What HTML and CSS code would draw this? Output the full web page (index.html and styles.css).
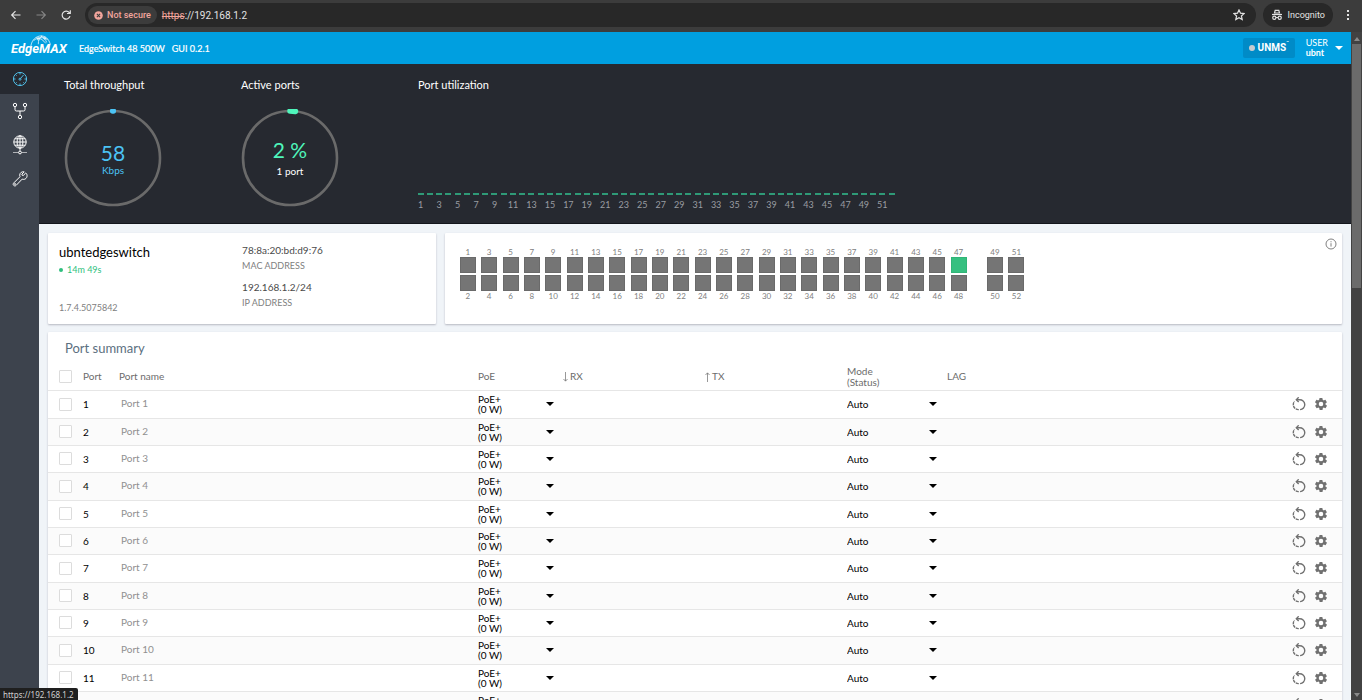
FILE: index.html
```html
<!DOCTYPE html>
<html lang="en">
<head>
<meta charset="utf-8">
<title>EdgeSwitch 48 500W</title>
<link rel="stylesheet" href="styles.css">
</head>
<body>
<header class="browser">
  <button class="nav-btn" aria-label="Back"><svg width="12" height="12" viewBox="0 0 12 12"><path d="M10.500 6H1.800M5.500 2.200L1.700 6l3.800 3.800"/></svg></button>
  <button class="nav-btn nav-off" aria-label="Forward"><svg width="12" height="12" viewBox="0 0 12 12"><path d="M1.500 6h8.700M6.500 2.200L10.300 6 6.500 9.800"/></svg></button>
  <button class="nav-btn" aria-label="Reload"><svg width="12" height="12" viewBox="0 0 12 12"><path d="M10 7.200A4 4 0 1 1 9.300 3.600L10 4.300M10.300 1.300v3.200H7"/></svg></button>
  <div class="address">
    <button class="secure"><svg width="9" height="9" viewBox="0 0 9 9"><circle cx="4.500" cy="4.500" r="4.300" fill="#f2a59c"/><path d="M2.900 2.900l3.200 3.200M6.100 2.900L2.900 6.100" stroke="#3c3c3c" stroke-width="1.100"/></svg>Not secure</button>
    <span class="url"><s>https</s>://192.168.1.2</span>
    <button class="star" aria-label="Bookmark"><svg width="12" height="12" viewBox="0 0 12 12"><path d="M6 .9l1.500 3.300 3.600.4-2.700 2.400.8 3.600L6 8.800l-3.200 1.800.8-3.600L.9 4.600l3.600-.4z"/></svg></button>
  </div>
  <div class="incognito"><svg width="12" height="12" viewBox="0 0 12 12"><path d="M3.500 4l.7-2.700h3.600L8.500 4z"/><path d="M1 5.500h10"/><circle cx="3.300" cy="8.800" r="1.600"/><circle cx="8.700" cy="8.800" r="1.600"/><path d="M5 8.500h2"/></svg>Incognito</div>
  <button class="dots" aria-label="Menu"><i></i><i></i><i></i></button>
</header>
<div class="viewport">
  <div class="app">
    <header class="topbar">
      <div class="logo"><svg class="globe" width="26" height="13" viewBox="0 0 28 14"><path d="M2 12C3 5 8 1 13 1s8 3 10 9M5 6c5-4 10-4 15-1M10 10c0-4 1-7 4-9M13 1c3 2 5 4 6 7M8 3c4 0 8 3 10 6"/><circle cx="10" cy="4.500" r="1"/><circle cx="17" cy="3.500" r="1"/></svg><span class="wordmark">EdgeMAX</span></div>
      <span class="model">EdgeSwitch 48 500W</span>
      <span class="gui">GUI 0.2.1</span>
      <button class="unms"><i class="unms-dot"></i><span>UNMS</span><sup>™</sup></button>
      <button class="user"><span>USER<br><b>ubnt</b></span><i class="caret"></i></button>
    </header>
    <div class="body">
      <nav class="side">
        <a class="side-item active" href="#" aria-label="Dashboard"><svg width="16" height="16" viewBox="0 0 16 16"><circle cx="8" cy="8" r="6.600"/><path d="M8 1.500v2M8 12.500v2M1.500 8h2M12.500 8h2M3.400 3.400l1.200 1.200M11.400 11.400l1.200 1.200M3.400 12.600l1.200-1.200M8.500 7.500l3-3.500"/><circle cx="8" cy="8.200" r="1"/></svg></a>
        <a class="side-item" href="#" aria-label="Ports"><svg width="16" height="18" viewBox="0 0 16 18"><circle cx="3" cy="3" r="1.700"/><circle cx="13" cy="3" r="1.700"/><circle cx="8" cy="15" r="1.700"/><path d="M3 4.700v3Q3 9 4.500 9h7Q13 9 13 7.700v-3M8 9v4.300"/></svg></a>
        <a class="side-item" href="#" aria-label="Network"><svg width="16" height="20" viewBox="0 0 16 20"><circle cx="8" cy="7" r="6.200"/><ellipse cx="8" cy="7" rx="2.900" ry="6.200"/><path d="M8 .8v15M1.800 7h12.400M2.800 3.800h10.400M2.800 10.200h10.400"/><path d="M1 17.500h5.500M9.500 17.500H15" stroke-opacity=".6"/><circle cx="8" cy="17.500" r="1.400"/></svg></a>
        <a class="side-item" href="#" aria-label="Tools"><svg width="16" height="16" viewBox="0 0 16 16"><path d="M13.700 2.100l-2.500 2.400-1.100-.3-.2-1.100 2.300-2.200C10 .3 7.800 1.700 7.700 4.100c0 .6.100 1.200.3 1.600L1.800 11.900c-1.800 1.700.7 4.200 2.400 2.400l6-6.200c2.900 1.200 5.600-1.500 4.700-4.600-.1-.6-.5-1.200-1.200-1.400z"/><circle cx="3" cy="13" r=".5"/></svg></a>
      </nav>
      <main class="main">
        <section class="dash">
          <div class="gauge">
            <h2>Total throughput</h2>
            <div class="ring"><svg width="98" height="98" viewBox="0 0 98 98"><circle cx="49" cy="49" r="47"/><path d="M48.700 2h.6" stroke="#4cc3f4"/></svg>
              <div class="ring-text kbps"><strong>58</strong><span>Kbps</span></div></div>
          </div>
          <div class="gauge">
            <h2>Active ports</h2>
            <div class="ring"><svg width="98" height="98" viewBox="0 0 98 98"><circle cx="49" cy="49" r="47"/><path d="M49 2a47 47 0 0 1 5.500.4" stroke="#4ff5bb"/></svg>
              <div class="ring-text active-ports"><strong>2 %</strong><span>1 port</span></div></div>
          </div>
          <div class="util">
            <h2>Port utilization</h2>
            <div class="util-chart" id="util"></div>
          </div>
        </section>
        <div class="cards">
          <section class="card device">
            <div class="device-name">
              <h1>ubntedgeswitch</h1>
              <p class="uptime"><i></i>14m 49s</p>
              <p class="version">1.7.4.5075842</p>
            </div>
            <dl class="addresses">
              <dd>78:8a:20:bd:d9:76</dd><dt>MAC ADDRESS</dt>
              <dd>192.168.1.2/24</dd><dt>IP ADDRESS</dt>
            </dl>
          </section>
          <section class="card ports">
            <div class="bank" id="copper"></div>
            <div class="bank fiber" id="fiber"></div>
            <button class="info" aria-label="Info"><svg width="12" height="12" viewBox="0 0 12 12"><circle cx="6" cy="6" r="5"/><path d="M6 5.200v3.400M6 3.200v1.100"/></svg></button>
          </section>
        </div>
        <section class="card summary">
          <h2>Port summary</h2>
          <table>
            <colgroup><col class="c-check"><col class="c-port"><col class="c-name"><col class="c-poe"><col class="c-rx"><col class="c-tx"><col class="c-mode"><col class="c-lag"><col class="c-act"></colgroup>
            <thead><tr><th><input type="checkbox" aria-label="Select all ports"></th><th>Port</th><th>Port name</th><th>PoE</th><th><span class="flow"><svg width="5" height="10" viewBox="0 0 5 10"><path d="M2.500 0v9M.5 7l2 2.200 2-2.200"/></svg>RX</span></th><th><span class="flow"><svg width="5" height="10" viewBox="0 0 5 10"><path d="M2.500 10V1M.5 3l2-2.200 2 2.200"/></svg>TX</span></th><th>Mode<br>(Status)</th><th>LAG</th><th></th></tr></thead>
            <tbody id="rows"></tbody>
          </table>
        </section>
      </main>
    </div>
  </div>
  <div class="scroll"><i class="scroll-up"></i><div class="thumb"></div><i class="scroll-down"></i></div>
</div>
<div class="status">https://192.168.1.2</div>
<script src="app.js"></script>
</body>
</html>
```
FILE: styles.css
```css
* { box-sizing: border-box; }
body { margin: 0; height: 100vh; overflow: hidden; display: flex; flex-direction: column; font-family: Lato, "Open Sans", sans-serif; font-size: 10px; color: #000; background: #f0f4f8; }
h1, h2, p, dl, dd, dt { margin: 0; font-weight: 400; }
button { border: 0; background: none; padding: 0; font: inherit; color: inherit; display: flex; align-items: center; }
svg { fill: none; stroke: currentColor; flex: none; display: block; }

.browser { height: 32px; flex: none; background: #3c3c3c; color: #e3e3e3; display: flex; align-items: center; padding: 0 13px 2px 10px; font-family: Roboto, "Noto Sans", sans-serif; font-size: 9px; }
.browser svg { stroke-width: 1.2; }
.nav-btn { width: 25px; }
.nav-off { color: #858585; }
.address { flex: 1; display: flex; align-items: center; height: 24px; border-radius: 12px; background: #282828; margin-right: 7px; padding: 0 11px 0 3px; }
.secure { height: 18px; padding: 0 6px; gap: 4px; border-radius: 9px; background: #3c3c3c; color: #f2a59c; font-weight: 500; }
.secure svg { stroke: none; }
.url { margin-left: 5px; font-size: 10px; flex: 1; }
.url s { color: #f2a59c; }
.incognito { display: flex; align-items: center; gap: 5px; height: 24px; padding: 0 8px; border-radius: 12px; background: #282828; margin-right: 14px; font-weight: 400; }
.dots { flex-direction: column; gap: 2px; }
.dots i { width: 2px; height: 2px; background: #e3e3e3; }

.viewport { flex: 1; min-height: 0; display: flex; }
.app { flex: 1; min-width: 0; display: flex; flex-direction: column; }
.topbar { height: 32px; flex: none; display: flex; align-items: center; background: #009fe0; color: #fff; padding: 0 8px 0 11px; font-size: 9px; }
.model, .gui { padding-top: 1px; -webkit-text-stroke: 0.2px; }
.logo { position: relative; width: 56px; margin-right: 12px; }
.wordmark { font: italic bold 13px/16px Roboto, "Liberation Sans", sans-serif; display: block; padding-top: 2px; }
.globe { position: absolute; left: 18px; top: -4px; stroke-width: 0.8; }
.gui { margin-left: 7px; flex: 1; }
.unms { height: 20px; padding: 0 6px; background: #008bc7; border-radius: 2px; font: bold 10px/14px Roboto, "Liberation Sans", sans-serif; margin-right: 11px; }
.unms-dot { width: 6px; height: 6px; border-radius: 50%; background: #c8ccd0; margin-right: 3px; }
.unms sup { font-size: 4px; align-self: flex-start; line-height: 10px; }
.user { text-align: left; line-height: 10px; gap: 7px; }
.caret { border: 4px solid transparent; border-top-color: currentColor; border-bottom: 0; flex: none; }

.body { flex: 1; min-height: 0; display: flex; }
.side { width: 39px; flex: none; background: #3d434d; color: #fff; }
.side-item { height: 34px; display: flex; align-items: center; justify-content: center; color: #fff; }
.side-item.active { height: 30px; background: #262930; color: #50bfe8; }
.main { flex: 1; min-width: 0; overflow: hidden; }

.dash { height: 160px; background: #262930; border-bottom: 1px solid #14161c; color: #fff; display: flex; padding: 14px 25px 0; }
.dash h2 { font-size: 11px; line-height: 14px; }
.gauge { width: 177px; flex: none; }
.ring { position: relative; width: 98px; height: 98px; margin-top: 17px; }
.ring circle { stroke: #6a6a6a; stroke-width: 2.6; }
.ring path { stroke-width: 5.5; stroke-linecap: round; }
.ring-text { position: absolute; inset: 0; display: flex; flex-direction: column; align-items: center; }
.ring-text strong { font-weight: 400; font-size: 21px; line-height: 24px; }
.ring-text span { line-height: 12px; }
.kbps { color: #4cc3f4; padding-top: 32px; }
.kbps span { margin-top: -1px; }
.active-ports { padding-top: 29px; }
.active-ports strong { color: #4ff5bb; }
.active-ports span { margin-top: 3px; }
.util-chart { width: 480px; display: flex; margin: 101px 0 0 -2px; }
.util-port { flex: 1 1 0; min-width: 0; display: flex; flex-direction: column; align-items: center; font-size: 9px; line-height: 12px; color: #9a9da2; }
.util-port::before { content: ""; width: 6px; height: 2px; background: #2f9a77; margin-bottom: 4px; }

.cards { display: flex; gap: 9px; padding: 9px 9px 8px; }
.card { background: #fff; box-shadow: 0 1px 2px rgba(50, 50, 70, 0.3); border-radius: 1px; }
.device { width: 30%; flex: none; height: 91px; display: flex; padding: 11px; }
.device-name { width: 50%; display: flex; flex-direction: column; }
.device h1 { font-size: 13px; line-height: 16px; }
.uptime { color: #2fbf7e; font-size: 9px; line-height: 12px; margin-top: 4px; display: flex; align-items: center; gap: 4px; }
.uptime i { width: 4px; height: 4px; border-radius: 50%; background: #2fbf7e; }
.version { margin-top: auto; font-size: 9px; line-height: 11px; color: #808080; }
.addresses dd { font-size: 10px; line-height: 12px; color: #4a4a4a; }
.addresses dt { font-size: 9px; line-height: 11px; color: #808080; margin: 4px 0 10px; }
.ports { flex: 1; display: flex; align-items: flex-start; padding: 15px 6px 0 12px; position: relative; }
.bank { display: grid; grid-auto-flow: column; grid-template-rows: 9px 18px 17px 9px; width: 512px; grid-auto-columns: 1fr; justify-items: center; font-size: 8px; line-height: 9px; color: #808080; margin-right: 15px; }
.fiber { width: 43px; }
.port { width: 16px; height: 16px; background: #757575; border: 1px solid #6a6a6a; }
.port.linked { background: #36c080; border-color: #31b477; }
.info { position: absolute; right: 5px; top: 5px; color: #808080; }

.summary { margin: 0 9px; }
.summary h2 { font-size: 13px; line-height: 16px; padding: 8px 17px 7px; color: #5b6f80; }
table { width: 100%; table-layout: fixed; border-collapse: collapse; }
.c-check { width: 35px; } .c-port { width: 36px; } .c-name { width: 359px; } .c-poe { width: 85px; } .c-rx { width: 142px; } .c-tx { width: 142px; } .c-mode { width: 100px; } .c-lag { width: 120px; }
th { height: 27px; padding: 1px 0 0; text-align: left; font-weight: 400; line-height: 11px; color: #6c6c6c; }
.flow { display: flex; align-items: center; gap: 2px; }
.flow svg { stroke-width: 0.7; }
td { height: 27px; padding: 0; border-top: 1px solid #e6e6e6; line-height: 10px; }
tbody tr:nth-child(3n+1) td { height: 28px; }
tbody tr:nth-child(even) { background: #fbfbfb; }
th:first-child, td:first-child { padding-left: 11px; }
input[type="checkbox"] { appearance: none; width: 13px; height: 13px; margin: 0; border: 1px solid #dcdcdc; border-radius: 1px; background: #fff; display: block; }
.name { font: inherit; width: 200px; height: 14px; border: 0; padding: 0 0 2px 2px; background: none; color: #909090; display: block; }
.drop { display: flex; align-items: center; justify-content: space-between; }
.poe { width: 76px; } .mode { width: 90px; }
.drop select { appearance: none; border: 0; padding: 0; margin: 0; background: none; font: inherit; line-height: 10px; color: #000; display: block; }
.acts { display: flex; justify-content: flex-end; gap: 9px; padding-right: 15px; color: #707070; }
.gear { fill: currentColor; stroke: none; }
.restart { stroke-width: 1.3; }

.scroll { width: 11px; flex: none; background: #424242; display: flex; flex-direction: column; align-items: center; padding: 5px 0 3px; }
.scroll-up, .scroll-down { border: 3px solid transparent; }
.scroll-up { border-top: 0; border-bottom: 4px solid #8a8a8a; }
.scroll-down { border-bottom: 0; border-top: 4px solid #8a8a8a; margin-top: auto; }
.thumb { width: 9px; height: 37%; margin-top: 3px; background: #6b6b6b; }
.status { position: fixed; left: 0; bottom: 0; height: 12px; padding: 0 4px 0 3px; background: #1f1f1f; color: #d0d0d0; border-radius: 0 2px 0 0; font: 8px/13px "Noto Sans", sans-serif; }
```
FILE: app.js
```js
const util = document.getElementById("util");
for (let n = 1; n <= 52; n++) {
  const el = document.createElement("div");
  el.className = "util-port";
  if (n % 2) el.append(n);
  util.append(el);
}

function bank(id, from, to) {
  let html = "";
  for (let n = from; n < to; n += 2) {
    html += `<span>${n}</span><i class="port${n === 47 ? " linked" : ""}"></i><i class="port"></i><span>${n + 1}</span>`;
  }
  document.getElementById(id).innerHTML = html;
}
bank("copper", 1, 48);
bank("fiber", 49, 52);

const restart = `<svg class="restart" width="14" height="14" viewBox="0 0 13 13"><path d="M4.200 2.500H7A4.600 4.600 0 0 1 7.500 11.700"/><path d="M6.200.3L4 2.500l2.200 2.200"/><path d="M6.300 11.700A4.700 4.700 0 0 1 2.300 4" stroke-dasharray="2.800 .7"/></svg>`;
const gear = `<svg class="gear" width="12" height="12" viewBox="2 2 20 20"><path d="M19.400 13a7.500 7.500 0 0 0 0-2l2.100-1.600c.2-.2.300-.4.100-.7l-2-3.400c-.1-.2-.4-.3-.6-.2l-2.500 1c-.5-.4-1.100-.7-1.700-1l-.4-2.600a.5.5 0 0 0-.5-.5h-4a.5.5 0 0 0-.5.500l-.4 2.600c-.6.300-1.200.6-1.700 1l-2.500-1c-.2-.1-.5 0-.6.200l-2 3.400c-.2.3-.1.5.1.7L4.600 11a7.500 7.500 0 0 0 0 2l-2.100 1.600c-.2.2-.3.4-.1.700l2 3.400c.1.2.4.3.6.2l2.500-1c.5.4 1.100.7 1.700 1l.4 2.600c0 .3.200.5.500.5h4c.3 0 .5-.2.5-.5l.4-2.600c.6-.3 1.200-.6 1.700-1l2.500 1c.2.1.5 0 .6-.2l2-3.400c.2-.3.1-.5-.1-.7zM12 15.800a3.800 3.800 0 1 1 0-7.600 3.800 3.800 0 0 1 0 7.600z"/></svg>`;

let rows = "";
for (let n = 1; n <= 12; n++) {
  rows += `<tr><td><input type="checkbox" aria-label="Select port ${n}"></td><td>${n}</td>
  <td><input class="name" value="Port ${n}" aria-label="Name of port ${n}"></td>
  <td><label class="drop poe"><span><select aria-label="PoE of port ${n}"><option>PoE+</option></select>(0 W)</span><i class="caret"></i></label></td>
  <td></td><td></td>
  <td><label class="drop mode"><select aria-label="Mode of port ${n}"><option>Auto</option></select><i class="caret"></i></label></td>
  <td></td><td><div class="acts"><button aria-label="Restart port ${n}">${restart}</button><button aria-label="Configure port ${n}">${gear}</button></div></td></tr>`;
}
document.getElementById("rows").innerHTML = rows;
```
